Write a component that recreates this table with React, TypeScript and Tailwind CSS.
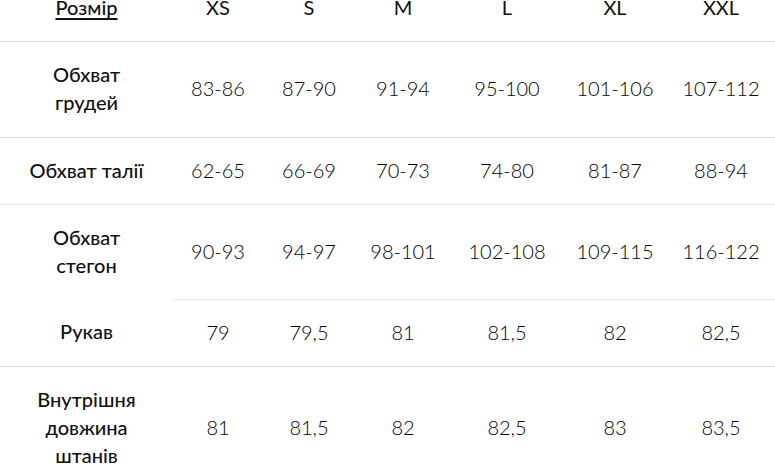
import React from "react";

const cols = "grid grid-cols-[173px_90px_92px_96px_112px_104px_108px]";

const rows: { label: string[]; values: string[]; h: string; noLabelBorder?: boolean }[] = [
  { label: ["Обхват", "грудей"], values: ["83-86", "87-90", "91-94", "95-100", "101-106", "107-112"], h: "h-[96px]" },
  { label: ["Обхват талії"], values: ["62-65", "66-69", "70-73", "74-80", "81-87", "88-94"], h: "h-[67px]" },
  { label: ["Обхват", "стегон"], values: ["90-93", "94-97", "98-101", "102-108", "109-115", "116-122"], h: "h-[95px]" },
  { label: ["Рукав"], values: ["79", "79,5", "81", "81,5", "82", "82,5"], h: "h-[67px]", noLabelBorder: true },
  { label: ["Внутрішня", "довжина", "штанів"], values: ["81", "81,5", "82", "82,5", "83", "83,5"], h: "h-[124px]" },
];

export default function App() {
  return (
    <div className="w-[775px] h-[464px] overflow-hidden bg-white" style={{ fontFamily: "Lato, 'Noto Sans', sans-serif" }}>
      <div className="-mt-[27px]">
        <div className={`${cols} h-[68px] items-center text-[20px] leading-[28px] text-[#111]`}>
          <div className="text-center font-medium underline underline-offset-[3px]">Розмір</div>
          {["XS", "S", "M", "L", "XL", "XXL"].map((s) => (
            <div key={s} className="text-center font-normal">{s}</div>
          ))}
        </div>
        {rows.map((r, i) => (
          <div key={i} className={`${cols} ${r.h} text-[20px] leading-[28px]`}>
            <div className={`flex flex-col items-center justify-center pb-[3px] text-center font-medium text-[#111] ${r.noLabelBorder ? "" : "border-t border-[#e3e3e3]"}`}>
              {r.label.map((l) => (
                <div key={l}>{l}</div>
              ))}
            </div>
            {r.values.map((v, j) => (
              <div key={j} className="flex items-center justify-center pb-[3px] border-t border-[#e3e3e3] font-light text-black">
                {v}
              </div>
            ))}
          </div>
        ))}
      </div>
    </div>
  );
}
